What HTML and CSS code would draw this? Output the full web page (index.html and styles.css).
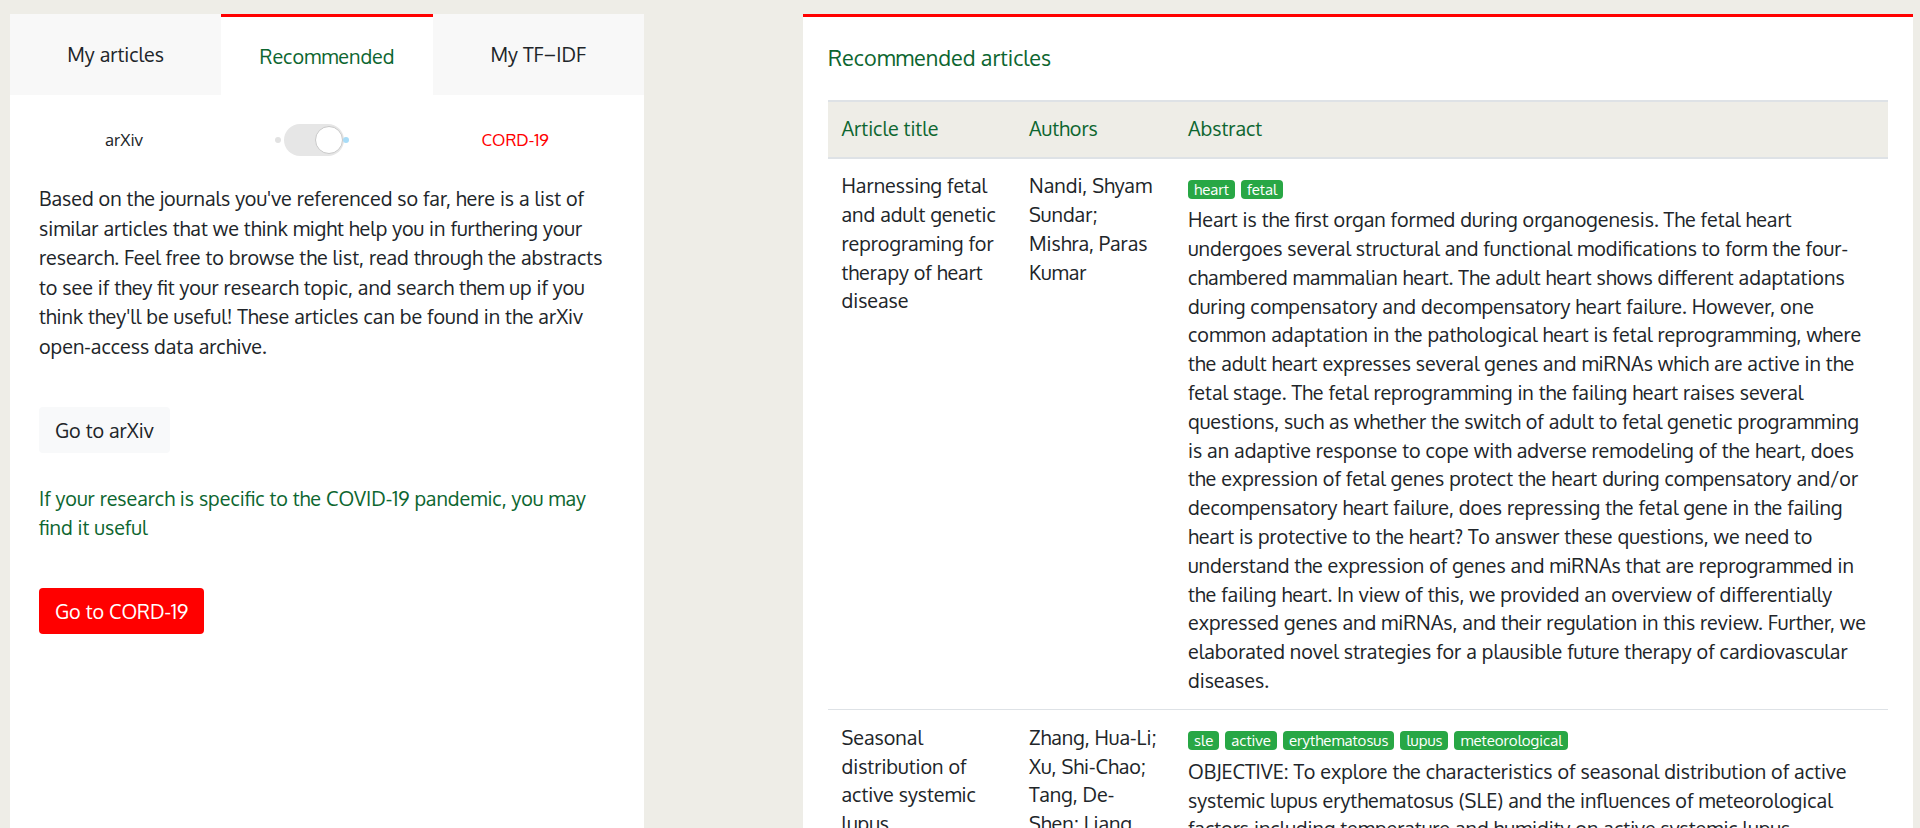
FILE: index.html
```html
<!DOCTYPE html>
<html lang="en">
<head>
<meta charset="utf-8">
<title>Recommended articles</title>
<link rel="stylesheet" href="styles.css">
</head>
<body>
<div class="page">
  <aside class="left-panel">
    <nav class="tabs">
      <div class="tab">My articles</div>
      <div class="tab active">Recommended</div>
      <div class="tab">My TF–IDF</div>
    </nav>
    <div class="left-body">
      <div class="source-toggle">
        <span class="src-label">arXiv</span>
        <span class="switch">
          <span class="dot dot-off"></span>
          <span class="track"><span class="knob"></span></span>
          <span class="dot dot-on"></span>
        </span>
        <span class="src-label cord">CORD-19</span>
      </div>
      <p class="intro">Based on the journals you've referenced so far, here is a list of similar articles that we think might help you in furthering your research. Feel free to browse the list, read through the abstracts to see if they fit your research topic, and search them up if you think they'll be useful! These articles can be found in the arXiv open-access data archive.</p>
      <button class="btn btn-light">Go to arXiv</button>
      <p class="covid-note">If your research is specific to the COVID-19 pandemic, you may find it useful</p>
      <button class="btn btn-red">Go to CORD-19</button>
    </div>
  </aside>

  <main class="right-panel">
    <h2 class="section-title">Recommended articles</h2>
    <table class="articles">
      <colgroup>
        <col class="col-title">
        <col class="col-authors">
        <col class="col-abstract">
      </colgroup>
      <thead>
        <tr><th>Article title</th><th>Authors</th><th>Abstract</th></tr>
      </thead>
      <tbody>
        <tr>
          <td>Harnessing fetal and adult genetic reprograming for therapy of heart disease</td>
          <td>Nandi, Shyam Sundar; Mishra, Paras Kumar</td>
          <td>
            <div class="tags"><span class="tag">heart</span><span class="tag">fetal</span></div>
            <div class="abstract">Heart is the first organ formed during organogenesis. The fetal heart undergoes several structural and functional modifications to form the four-chambered mammalian heart. The adult heart shows different adaptations during compensatory and decompensatory heart failure. However, one common adaptation in the pathological heart is fetal reprogramming, where the adult heart expresses several genes and miRNAs which are active in the fetal stage. The fetal reprogramming in the failing heart raises several questions, such as whether the switch of adult to fetal genetic programming is an adaptive response to cope with adverse remodeling of the heart, does the expression of fetal genes protect the heart during compensatory and/or decompensatory heart failure, does repressing the fetal gene in the failing heart is protective to the heart? To answer these questions, we need to understand the expression of genes and miRNAs that are reprogrammed in the failing heart. In view of this, we provided an overview of differentially expressed genes and miRNAs, and their regulation in this review. Further, we elaborated novel strategies for a plausible future therapy of cardiovascular diseases.</div>
          </td>
        </tr>
        <tr>
          <td>Seasonal distribution of active systemic lupus erythematosus and its correlation with meteorological factors</td>
          <td>Zhang, Hua-Li; Xu, Shi-Chao; Tang, De-Shen; Liang, Jun; Ye, Dong-Qing</td>
          <td>
            <div class="tags"><span class="tag">sle</span><span class="tag">active</span><span class="tag">erythematosus</span><span class="tag">lupus</span><span class="tag">meteorological</span></div>
            <div class="abstract">OBJECTIVE: To explore the characteristics of seasonal distribution of active systemic lupus erythematosus (SLE) and the influences of meteorological factors including temperature and humidity on active systemic lupus erythematosus. METHODS: The clinical data of patients with active SLE were collected and analysed together with the meteorological data of the same period.</div>
          </td>
        </tr>
      </tbody>
    </table>
  </main>
</div>
</body>
</html>
```
FILE: styles.css
```css
html {
  scrollbar-width: none;
}
body {
  margin: 0;
  background: #eeede7;
  color: #212529;
  font-family: "Oxygen", "Lato", "Open Sans", sans-serif;
  font-size: 19.8px;
}
.page {
  display: grid;
  grid-template-columns: 634px 1110px;
  column-gap: 159px;
  padding: 14px 0 0 10px;
  align-items: stretch;
}

/* ---------- left panel ---------- */
.left-panel {
  background: #fff;
}
.tabs {
  display: flex;
  height: 81px;
}
.tab {
  flex: 1;
  display: flex;
  align-items: center;
  justify-content: center;
  background: #f8f8f8;
  color: #212529;
  font-size: 19.8px;
}
.tab.active {
  background: #fff;
  color: #0d6630;
  border-top: 3px solid #ff0000;
}
.left-body {
  padding: 0 29px;
}
.source-toggle {
  display: flex;
  justify-content: space-around;
  align-items: center;
  height: 35px;
  margin-top: 27px;
}
.src-label {
  font-size: 16.8px;
  color: #212529;
}
.src-label.cord {
  color: #ff0000;
}
.switch {
  display: flex;
  align-items: center;
}
.dot {
  width: 6px;
  height: 6px;
  border-radius: 50%;
}
.dot-off {
  background: #e2e2e2;
  margin-right: 3px;
}
.dot-on {
  background: #a9dcf7;
  margin-left: -1px;
}
.track {
  display: flex;
  justify-content: flex-end;
  align-items: center;
  width: 60px;
  height: 32px;
  padding: 0 1px;
  box-sizing: border-box;
  border-radius: 16px;
  background: #e6e6e6;
}
.knob {
  width: 28px;
  height: 28px;
  box-sizing: border-box;
  border-radius: 50%;
  background: #fff;
  border: 1px solid #c9c9c9;
}
.intro {
  margin: 27px 0 0;
  line-height: 29.5px;
}
.btn {
  display: inline-block;
  font-family: inherit;
  font-size: 19.8px;
  line-height: 27px;
  padding: 9.5px 16px;
  border: 0;
  border-radius: 4px;
  cursor: pointer;
}
.btn-light {
  margin-top: 46px;
  background: #f8f9fa;
  color: #212529;
}
.covid-note {
  margin: 31px 0 0;
  line-height: 29px;
  color: #0d6630;
}
.btn-red {
  margin-top: 46px;
  background: #ff0000;
  color: #fff;
}

/* ---------- right panel ---------- */
.right-panel {
  background: #fff;
  border-top: 3px solid #ff0000;
  padding: 0 25px;
}
.section-title {
  margin: 27.5px 0 29.5px;
  font-size: 21.6px;
  line-height: 26px;
  font-weight: normal;
  color: #0d6630;
}
.articles {
  width: 100%;
  border-collapse: collapse;
  table-layout: fixed;
}
.col-title {
  width: 187.5px;
}
.col-authors {
  width: 159px;
}
.articles th {
  background: #eeede7;
  color: #0d6630;
  font-weight: normal;
  text-align: left;
  padding: 13px 13.5px;
  line-height: 28.8px;
  border-top: 2px solid #dee2e6;
  border-bottom: 2px solid #dee2e6;
}
.articles td {
  padding: 13.5px;
  vertical-align: top;
  line-height: 28.8px;
  border-top: 1px solid #dee2e6;
}
.tags {
  display: flex;
  gap: 6px;
  height: 34px;
  padding-top: 7.5px;
  box-sizing: border-box;
}
.tag {
  display: inline-block;
  height: 19px;
  line-height: 19px;
  padding: 0 6px;
  border-radius: 4px;
  background: #28a745;
  color: #fff;
  font-size: 15px;
}
```
